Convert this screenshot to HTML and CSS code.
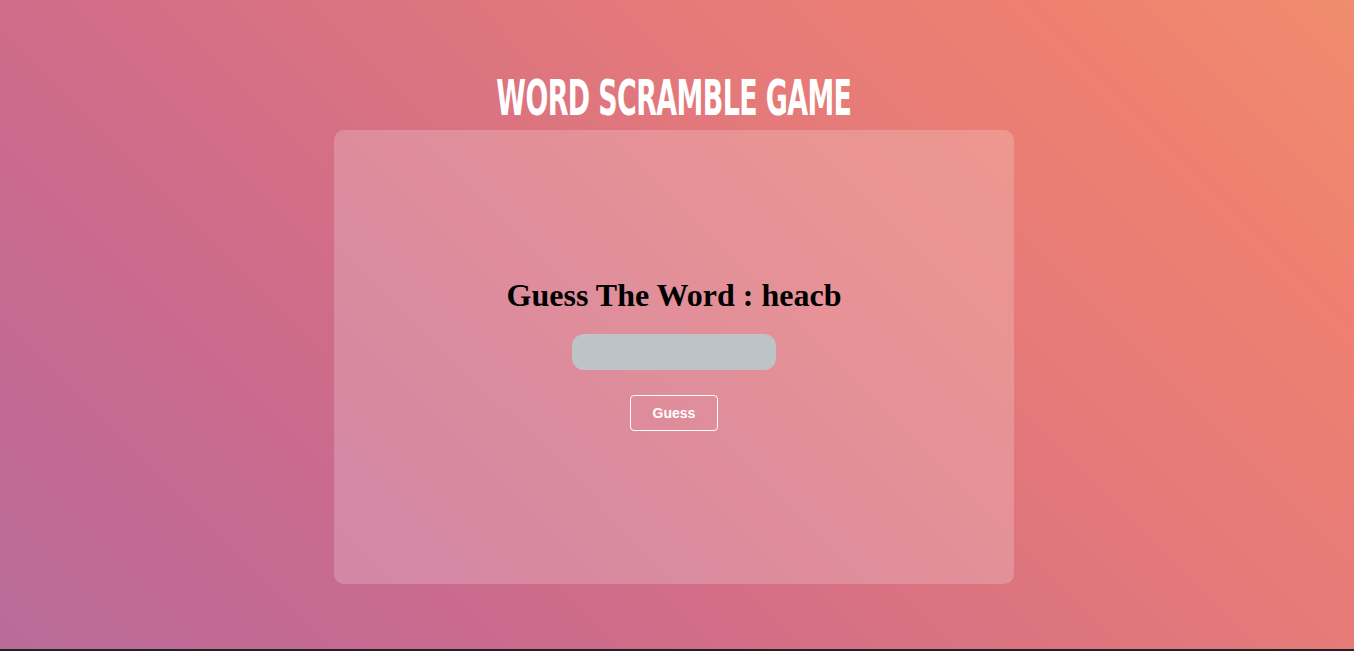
FILE: index.html
```html
<!DOCTYPE html>
<html>
<head>
<meta charset="utf-8">
<link rel="stylesheet" href="styles.css">
</head>
<body>
<div class="page">
  <h1 class="title"><span class="title-text">WORD SCRAMBLE GAME</span></h1>
  <div class="card">
    <h2 class="prompt">Guess The Word : heacb</h2>
    <input class="guess-input" type="text">
    <button class="guess-btn">Guess</button>
  </div>
</div>
</body>
</html>
```

FILE: styles.css
```css
html, body {
  margin: 0;
  padding: 0;
  background: #222226;
}
.page {
  height: 649px;
  box-sizing: border-box;
  padding-right: 6px;
  background: linear-gradient(45deg, #b96c99 0%, #c56a92 17%, #cf6c89 33%, #e57a79 66%, #ef8070 85%, #f08d6e 100%);
  display: flex;
  flex-direction: column;
  align-items: center;
  overflow: hidden;
}
.title {
  margin: 68px 0 0 0;
  height: 62px;
  font-family: "DejaVu Sans Condensed", "DejaVu Sans", sans-serif;
  font-stretch: condensed;
  font-weight: bold;
  font-size: 50px;
  line-height: 60px;
  color: #fff;
  text-align: center;
  white-space: nowrap;
}
.title-text {
  display: inline-block;
  transform: scaleX(0.598);
  letter-spacing: -1px;
}
.card {
  width: 680px;
  height: 454px;
  box-sizing: border-box;
  padding-bottom: 6px;
  background: rgba(255, 255, 255, 0.2);
  border-radius: 10px;
  display: flex;
  flex-direction: column;
  align-items: center;
  justify-content: center;
}
.prompt {
  margin: 0 0 20px 0;
  font-family: "Liberation Serif", "Times New Roman", serif;
  font-weight: bold;
  font-size: 32px;
  color: #000;
}
.guess-input {
  width: 204px;
  height: 36px;
  box-sizing: border-box;
  border: none;
  border-radius: 12px;
  background: #bdc3c7;
  outline: none;
  margin: 0 0 25px 0;
}
.guess-btn {
  width: 88px;
  height: 36px;
  box-sizing: border-box;
  background: transparent;
  border: 1px solid #fff;
  border-radius: 4px;
  color: #fff;
  font-family: "Liberation Sans", Arial, sans-serif;
  font-weight: bold;
  font-size: 14px;
}
```
